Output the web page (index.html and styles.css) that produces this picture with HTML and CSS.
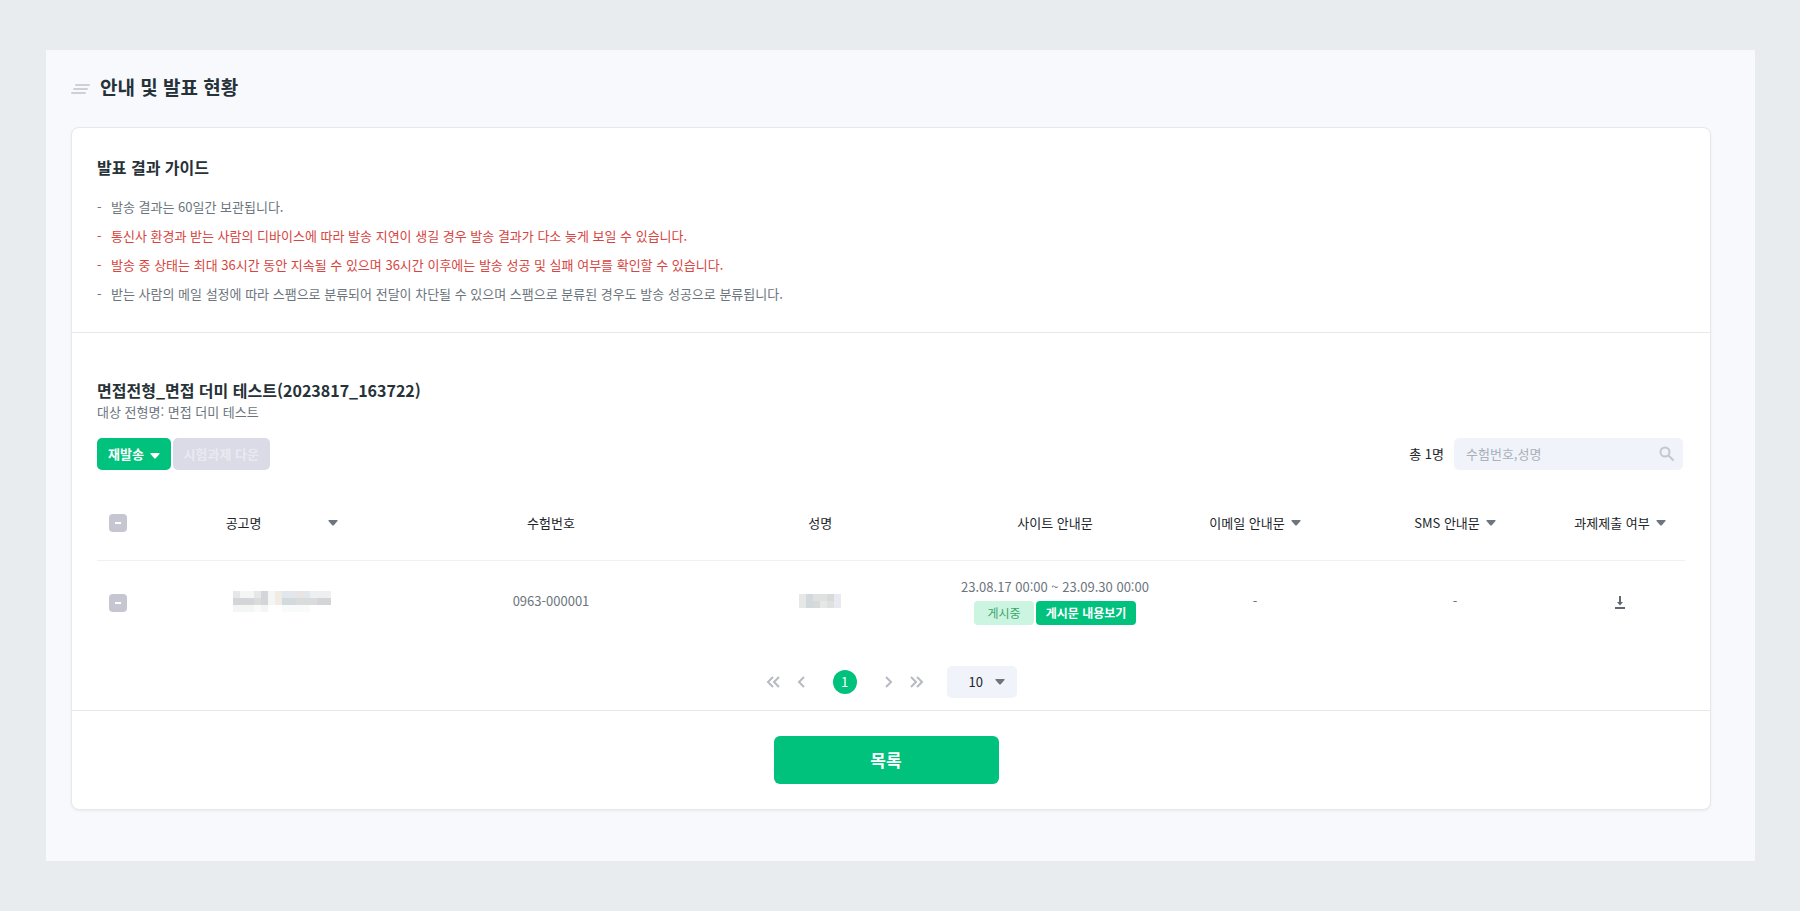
FILE: index.html
```html
<!doctype html>
<html lang="ko">
<head>
    <meta charset="UTF-8">
    <meta name="viewport" content="width=device-width, initial-scale=1">
    <title>안내 및 발표 현황</title>
    <link rel="stylesheet" href="styles.css">
</head>
<body>
<main class="panel">
    <header class="page-head">
        <svg class="title-icon" viewBox="0 0 20 12" aria-hidden="true">
            <path d="M5 2h13M3 6h13M1 10h13"/>
        </svg>
        <h1>안내 및 발표 현황</h1>
    </header>

    <div class="card">
        <section class="guide">
            <h2>발표 결과 가이드</h2>
            <ul>
                <li>발송 결과는 60일간 보관됩니다.</li>
                <li class="warn">통신사 환경과 받는 사람의 디바이스에 따라 발송 지연이 생길 경우 발송 결과가 다소 늦게 보일 수 있습니다.</li>
                <li class="warn">발송 중 상태는 최대 36시간 동안 지속될 수 있으며 36시간 이후에는 발송 성공 및 실패 여부를 확인할 수 있습니다.</li>
                <li>받는 사람의 메일 설정에 따라 스팸으로 분류되어 전달이 차단될 수 있으며 스팸으로 분류된 경우도 발송 성공으로 분류됩니다.</li>
            </ul>
        </section>

        <section class="result">
            <h2>면접전형_면접 더미 테스트(2023817_163722)</h2>
            <p class="target">대상 전형명: 면접 더미 테스트</p>

            <div class="toolbar">
                <button type="button" class="btn">재발송 <svg class="arrow" viewBox="0 0 10 6" aria-hidden="true"><path d="M1 0h8q1 0 .5 1L6 5q-1 1-2 0L.5 1Q0 0 1 0z"/></svg></button>
                <button type="button" class="btn btn-off" disabled>시험과제 다운</button>
                <span class="total">총 1명</span>
                <div class="search">
                    <input type="text" aria-label="수험번호,성명" placeholder="수험번호,성명">
                    <svg viewBox="0 0 16 16" aria-hidden="true"><circle cx="6" cy="6" r="4.5"/><path d="M9.500 9.500L14.500 14.500"/></svg>
                </div>
            </div>

            <table>
                <colgroup>
                    <col class="col-check"><col><col><col>
                    <col class="col-notice"><col class="col-notice"><col class="col-notice"><col class="col-task">
                </colgroup>
                <thead>
                    <tr>
                        <th class="check"><input type="checkbox" aria-label="전체 선택"></th>
                        <th><button type="button" class="sort sort-wide">공고명 <svg class="arrow" viewBox="0 0 10 6" aria-hidden="true"><path d="M1 0h8q1 0 .5 1L6 5q-1 1-2 0L.5 1Q0 0 1 0z"/></svg></button></th>
                        <th>수험번호</th>
                        <th>성명</th>
                        <th>사이트 안내문</th>
                        <th><button type="button" class="sort">이메일 안내문 <svg class="arrow" viewBox="0 0 10 6" aria-hidden="true"><path d="M1 0h8q1 0 .5 1L6 5q-1 1-2 0L.5 1Q0 0 1 0z"/></svg></button></th>
                        <th><button type="button" class="sort">SMS 안내문 <svg class="arrow" viewBox="0 0 10 6" aria-hidden="true"><path d="M1 0h8q1 0 .5 1L6 5q-1 1-2 0L.5 1Q0 0 1 0z"/></svg></button></th>
                        <th><button type="button" class="sort">과제제출 여부 <svg class="arrow" viewBox="0 0 10 6" aria-hidden="true"><path d="M1 0h8q1 0 .5 1L6 5q-1 1-2 0L.5 1Q0 0 1 0z"/></svg></button></th>
                    </tr>
                </thead>
                <tbody>
                    <tr>
                        <td class="check"><input type="checkbox" aria-label="선택"></td>
                        <td>
                            <svg class="mask" width="98" height="21" viewBox="0 0 98 21" shape-rendering="crispEdges" aria-hidden="true">
                                <path fill="#e6e7e8" d="M0 0h98v7H0z"/>
                                <path fill="#dadcdc" d="M0 7h98v7H0z"/>
                                <path fill="#f4f5f5" d="M7 0h14v7H7zM35 0h7v14h-7zM0 14h21v7H0zM28 14h7v7h-7z"/>
                                <path fill="#f9fafa" d="M21 14h7v7h-7zM49 14h28v7H49z"/>
                                <path fill="#d4d5d8" d="M0 7h21v7H0zM28 0h7v14h-7zM84 7h14v7H84z"/>
                                <path fill="#f1ebe4" d="M42 0h7v14h-7z"/>
                                <path fill="#e1e7ec" d="M49 0h14v7H49zM70 0h7v7h-7z"/>
                                <path fill="#d3dadd" d="M49 7h14v7H49z"/>
                                <path fill="#e9e4df" d="M63 0h7v7h-7z"/>
                                <path fill="#eeeff0" d="M77 0h21v7H77z"/>
                            </svg>
                        </td>
                        <td>0963-000001</td>
                        <td>
                            <svg class="mask" width="42" height="14" viewBox="0 0 42 14" shape-rendering="crispEdges" aria-hidden="true">
                                <path fill="#dfe1e1" d="M0 0h42v14H0z"/>
                                <path fill="#e7e7e7" d="M0 0h7v14H0zM21 7h7v7h-7z"/>
                                <path fill="#d1d9dc" d="M7 0h7v14H7z"/>
                                <path fill="#d8dada" d="M28 0h7v7h-7zM14 7h7v7h-7z"/>
                                <path fill="#e8eaf1" d="M35 0h7v14h-7z"/>
                            </svg>
                        </td>
                        <td>
                            <div class="period">23.08.17 00:00 ~ 23.09.30 00:00</div>
                            <div class="posting">
                                <span class="badge">게시중</span>
                                <button type="button" class="view">게시문 내용보기</button>
                            </div>
                        </td>
                        <td>-</td>
                        <td>-</td>
                        <td>
                            <button type="button" class="download" aria-label="다운로드">
                                <svg viewBox="0 0 10 14" aria-hidden="true"><path d="M4 0h2v6h2L5 9.500 2 6h2zM0 11h10v2H0z"/></svg>
                            </button>
                        </td>
                    </tr>
                </tbody>
            </table>

            <nav class="paging">
                <button type="button" aria-label="처음"><svg viewBox="0 0 14 12" width="14" height="12"><path d="M7 1L2 6l5 5M13 1L8 6l5 5"/></svg></button>
                <button type="button" aria-label="이전"><svg viewBox="0 0 8 12" width="8" height="12"><path d="M7 1L2 6l5 5"/></svg></button>
                <a class="current" href="#">1</a>
                <button type="button" aria-label="다음"><svg viewBox="0 0 8 12" width="8" height="12"><path d="M1 1l5 5-5 5"/></svg></button>
                <button type="button" aria-label="마지막"><svg viewBox="0 0 14 12" width="14" height="12"><path d="M1 1l5 5-5 5M7 1l5 5-5 5"/></svg></button>
                <div class="page-size">
                    <select aria-label="페이지 크기"><option>10</option><option>20</option><option>50</option></select>
                    <svg class="arrow" viewBox="0 0 10 6" aria-hidden="true"><path d="M1 0h8q1 0 .5 1L6 5q-1 1-2 0L.5 1Q0 0 1 0z"/></svg>
                </div>
            </nav>
        </section>

        <footer class="card-foot">
            <button type="button" class="list-btn">목록</button>
        </footer>
    </div>
</main>
</body>
</html>
```

FILE: styles.css
```css
* {
    box-sizing: border-box;
}
body {
    margin: 0;
    padding: 50px 45px 50px 46px;
    background: #e8ecef;
    color: #212529;
    font: 13px/20px "Noto Sans CJK KR", sans-serif;
}
button, input, select {
    font: inherit;
    color: inherit;
    border: none;
    margin: 0;
    padding: 0;
    background: none;
}
button {
    cursor: pointer;
}
h1, h2, p, ul {
    margin: 0;
    padding: 0;
}
h1 {
    font-size: 19px;
    line-height: 28px;
    color: #263238;
}
h2 {
    font-size: 16px;
    line-height: 24px;
    color: #263238;
}
.panel {
    background: #f8f9fd;
    padding: 23px 44px 51px 25px;
}
.page-head {
    display: flex;
    align-items: center;
    gap: 9px;
    margin-bottom: 26px;
}
.title-icon {
    width: 20px;
    height: 12px;
    margin-top: 4px;
    fill: none;
    stroke: #cdd0d6;
    stroke-width: 2;
    stroke-linecap: round;
}
.card {
    background: #fff;
    border: 1px solid #e6e8ec;
    border-radius: 8px;
    box-shadow: 0 1px 3px rgba(0, 0, 0, 0.06);
}
.guide {
    padding: 27px 25px 24px;
    border-bottom: 1px solid #e6e8ea;
}
.guide ul {
    margin-top: 13px;
    list-style: none;
    line-height: 29px;
    color: #6c757d;
}
.guide li::before {
    content: "-";
    display: inline-block;
    width: 14px;
}
.guide .warn {
    color: #d64541;
}

.result {
    padding: 45px 25px 12px;
    border-bottom: 1px solid #e6e8ea;
}
.target {
    color: #6c757d;
}
.toolbar {
    display: flex;
    align-items: center;
    gap: 2px;
    margin-top: 16px;
    padding-right: 2px;
}
.btn {
    height: 32px;
    padding: 0 11px;
    border-radius: 5px;
    background: #00c27c;
    color: #fff;
    font-weight: bold;
}
.btn-off {
    background: #dadbe6;
    color: #e9eaf1;
}
.arrow {
    width: 10px;
    height: 6px;
    fill: #6c757d;
}
.btn .arrow {
    margin-left: 2px;
    fill: #fff;
}
.total {
    margin-left: auto;
    margin-right: 8px;
}
.search {
    display: flex;
    align-items: center;
    width: 229px;
    height: 32px;
    padding: 0 8px 0 12px;
    border-radius: 5px;
    background: #f0f3fa;
}
.search input {
    flex: 1;
    min-width: 0;
    outline: none;
}
.search input::placeholder {
    color: #a9b0bb;
}
.search svg {
    width: 16px;
    height: 16px;
    fill: none;
    stroke: #c3c7cf;
    stroke-width: 2;
}

table {
    width: 100%;
    margin-top: 17px;
    border-collapse: collapse;
    table-layout: fixed;
    text-align: center;
}
.col-check {
    width: 50px;
}
.col-notice {
    width: 200px;
}
.col-task {
    width: 130px;
}
th {
    height: 73px;
    padding: 0;
    font-weight: normal;
    border-bottom: 1px solid #eef0f2;
}
td {
    height: 82px;
    padding: 0;
    color: #6c757d;
}
.check {
    text-align: left;
    padding-left: 12px;
}
.check input {
    appearance: none;
    display: block;
    width: 18px;
    height: 18px;
    border-radius: 4px;
    background: linear-gradient(#fff, #fff) center / 6px 2px no-repeat #c5c6d2;
}
td.check {
    padding-top: 4px;
}
.sort {
    display: inline-flex;
    align-items: center;
    gap: 6px;
}
.sort-wide {
    width: 112px;
    justify-content: space-between;
}
.mask {
    display: block;
    margin: 0 auto;
}
.posting {
    display: flex;
    justify-content: center;
    gap: 2px;
    margin-top: 4px;
    font-size: 12px;
    line-height: 24px;
}
.badge {
    width: 60px;
    border-radius: 4px;
    background: #cbf5e1;
    color: #3aa66c;
}
.view {
    width: 100px;
    border-radius: 4px;
    background: #00c27c;
    color: #fff;
    font-weight: bold;
}
.download {
    vertical-align: middle;
}
.download svg {
    display: block;
    width: 10px;
    height: 14px;
    fill: #5f6872;
}

.paging {
    display: flex;
    justify-content: center;
    align-items: center;
    margin-top: 24px;
    gap: 17px;
}
.paging button {
    display: flex;
}
.paging button svg {
    fill: none;
    stroke: #b7bac1;
    stroke-width: 2;
}
.current {
    width: 24px;
    margin: 0 11px;
    border-radius: 50%;
    background: #00c27c;
    color: #fff;
    line-height: 24px;
    text-align: center;
    text-decoration: none;
}
.page-size {
    position: relative;
    margin-left: 6px;
}
.page-size select {
    appearance: none;
    display: block;
    width: 70px;
    height: 32px;
    padding-left: 22px;
    border-radius: 5px;
    background: #f0f3fa;
}
.page-size .arrow {
    position: absolute;
    top: 13px;
    right: 12px;
    pointer-events: none;
}

.card-foot {
    padding: 25px 10px 25px 0;
    text-align: center;
}
.list-btn {
    width: 225px;
    height: 48px;
    border-radius: 6px;
    background: #00c27c;
    color: #fff;
    font-size: 17px;
    font-weight: bold;
    vertical-align: top;
}
```
